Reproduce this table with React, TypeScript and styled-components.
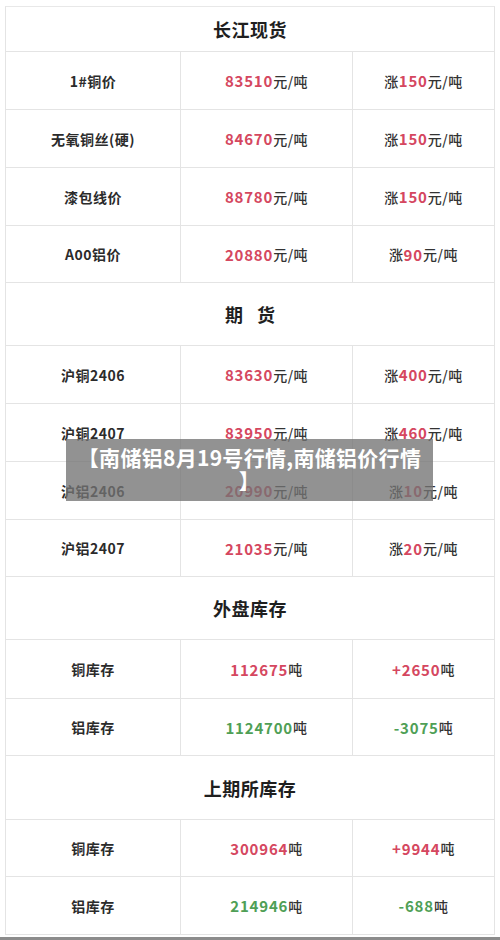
import React from 'react';
import styled, { createGlobalStyle } from 'styled-components';

const GlobalStyle = createGlobalStyle`
  html, body {
    margin: 0;
    padding: 0;
    background: #ffffff;
  }
  body {
    font-family: "Noto Sans CJK SC", "Noto Sans", sans-serif;
    color: #2b2b2b;
  }
  * {
    box-sizing: border-box;
  }
`;

const Page = styled.div`
  position: relative;
  width: 500px;
  height: 940px;
  padding: 6px 5px 0 5px;
  overflow: hidden;
`;

const Table = styled.div`
  width: 490px;
  border: 1px solid #e4e4e4;
  border-top-color: #e8e8e8;
  display: flex;
  flex-direction: column;
`;

const SectionHeader = styled.div<{ $h: number; $spaced?: boolean }>`
  height: ${(p) => p.$h}px;
  display: flex;
  align-items: center;
  justify-content: center;
  font-size: 18px;
  font-weight: 700;
  color: #1f1f1f;
  letter-spacing: ${(p) => (p.$spaced ? '14px' : '0.5px')};
  padding-left: ${(p) => (p.$spaced ? '14px' : '0')};
  border-top: 1px solid #e4e4e4;
  &:first-child {
    border-top: none;
  }
`;

const Row = styled.div<{ $h: number }>`
  height: ${(p) => p.$h}px;
  display: grid;
  grid-template-columns: 175px 172px 1fr;
  border-top: 1px solid #e4e4e4;
`;

const Cell = styled.div`
  display: flex;
  align-items: center;
  justify-content: center;
  font-size: 14px;
  font-weight: 700;
  color: #2b2b2b;
  letter-spacing: 0.5px;
  border-right: 1px solid #e4e4e4;
  &:last-child {
    border-right: none;
  }
`;

const Num = styled.span<{ $tone: 'up' | 'down' }>`
  color: ${(p) => (p.$tone === 'up' ? '#d5475f' : '#4f9f56')};
  font-size: 15px;
  letter-spacing: 0.8px;
`;

const Light = styled.span`
  font-weight: 500;
  color: #333333;
`;

const Overlay = styled.div`
  position: absolute;
  left: 66px;
  top: 439px;
  width: 367px;
  height: 62px;
  background: rgba(115, 115, 115, 0.78);
  color: #ffffff;
  font-size: 21px;
  font-weight: 700;
  line-height: 23px;
  text-align: center;
  padding-top: 7px;
  letter-spacing: 0.3px;
`;

const BottomEdge = styled.div`
  position: absolute;
  left: 0;
  right: 0;
  bottom: 0;
  height: 3px;
  background: #8c8c8c;
`;

type Item = {
  name: string;
  price: string;
  change: string;
  unit: string;
  prefix?: string;
  tone: 'up' | 'down';
};

const spot: Item[] = [
  { name: '1#铜价', price: '83510', prefix: '涨', change: '150', unit: '元/吨', tone: 'up' },
  { name: '无氧铜丝(硬)', price: '84670', prefix: '涨', change: '150', unit: '元/吨', tone: 'up' },
  { name: '漆包线价', price: '88780', prefix: '涨', change: '150', unit: '元/吨', tone: 'up' },
  { name: 'A00铝价', price: '20880', prefix: '涨', change: '90', unit: '元/吨', tone: 'up' },
];

const futures: Item[] = [
  { name: '沪铜2406', price: '83630', prefix: '涨', change: '400', unit: '元/吨', tone: 'up' },
  { name: '沪铜2407', price: '83950', prefix: '涨', change: '460', unit: '元/吨', tone: 'up' },
  { name: '沪铝2406', price: '20990', prefix: '涨', change: '10', unit: '元/吨', tone: 'up' },
  { name: '沪铝2407', price: '21035', prefix: '涨', change: '20', unit: '元/吨', tone: 'up' },
];

const lme: Item[] = [
  { name: '铜库存', price: '112675', change: '+2650', unit: '吨', tone: 'up' },
  { name: '铝库存', price: '1124700', change: '-3075', unit: '吨', tone: 'down' },
];

const shfe: Item[] = [
  { name: '铜库存', price: '300964', change: '+9944', unit: '吨', tone: 'up' },
  { name: '铝库存', price: '214946', change: '-688', unit: '吨', tone: 'down' },
];

const spotH = [58, 58, 58, 57];
const futH = [58, 58, 58, 57];
const lmeH = [59, 57];
const shfeH = [57, 58];

function DataRow({ item, h }: { item: Item; h: number }) {
  return (
    <Row $h={h}>
      <Cell>{item.name}</Cell>
      <Cell>
        <Num $tone={item.tone}>{item.price}</Num>
        <Light>{item.unit}</Light>
      </Cell>
      <Cell>
        {item.prefix && <Light>{item.prefix}</Light>}
        <Num $tone={item.tone}>{item.change}</Num>
        <Light>{item.unit}</Light>
      </Cell>
    </Row>
  );
}

export default function App() {
  return (
    <>
      <GlobalStyle />
      <Page>
        <Table>
          <SectionHeader $h={44}>长江现货</SectionHeader>
          {spot.map((it, i) => (
            <DataRow key={it.name} item={it} h={spotH[i]} />
          ))}
          <SectionHeader $h={63} $spaced>
            期货
          </SectionHeader>
          {futures.map((it, i) => (
            <DataRow key={it.name} item={it} h={futH[i]} />
          ))}
          <SectionHeader $h={63}>外盘库存</SectionHeader>
          {lme.map((it, i) => (
            <DataRow key={it.name} item={it} h={lmeH[i]} />
          ))}
          <SectionHeader $h={64}>上期所库存</SectionHeader>
          {shfe.map((it, i) => (
            <DataRow key={'s' + it.name} item={it} h={shfeH[i]} />
          ))}
        </Table>
        <Overlay>
          【南储铝8月19号行情,南储铝价行情
          <br />】
        </Overlay>
        <BottomEdge />
      </Page>
    </>
  );
}
